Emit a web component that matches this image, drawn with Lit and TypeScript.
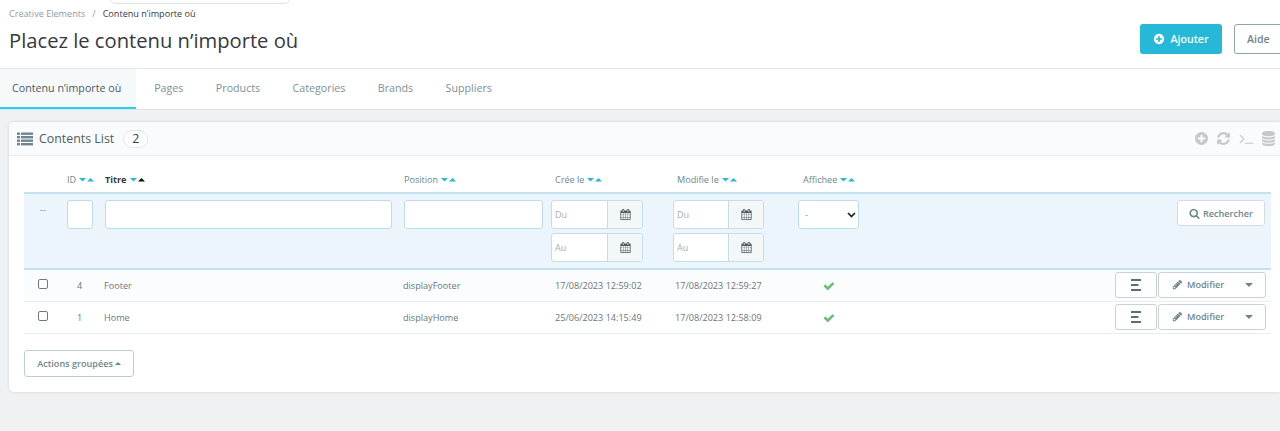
import { LitElement, html, css, svg } from 'lit';
import { customElement } from 'lit/decorators.js';

const FA = {
  plus: 'M1344 960v-128q0-26-19-45t-45-19h-256v-256q0-26-19-45t-45-19h-128q-26 0-45 19t-19 45v256h-256q-26 0-45 19t-19 45v128q0 26 19 45t45 19h256v256q0 26 19 45t45 19h128q26 0 45-19t19-45v-256h256q26 0 45-19t19-45zm320-64q0 209-103 385.5t-279.5 279.5-385.5 103-385.5-103-279.5-279.5-103-385.5 103-385.5 279.5-279.5 385.5-103 385.5 103 279.5 279.5 103 385.5z',
  refresh: 'M1639 1056q0 5-1 7-64 268-268 434.5t-478 166.5q-146 0-282.5-55t-243.5-157l-129 129q-19 19-45 19t-45-19-19-45v-448q0-26 19-45t45-19h448q26 0 45 19t19 45-19 45l-137 137q71 66 161 102t187 36q134 0 250-65t186-179q11-17 53-117 8-23 30-23h192q13 0 22.5 9.5t9.5 22.5zm25-800v448q0 26-19 45t-45 19h-448q-26 0-45-19t-19-45 19-45l138-138q-148-137-349-137-134 0-250 65t-186 179q-11 17-53 117-8 23-30 23h-199q-13 0-22.5-9.5t-9.5-22.5v-7q65-268 270-434.5t480-166.5q146 0 284 55.5t245 156.5l130-129q19-19 45-19t45 19 19 45z',
  terminal: 'M649 983l-466 466q-10 10-23 10t-23-10l-50-50q-10-10-10-23t10-23l393-393-393-393q-10-10-10-23t10-23l50-50q10-10 23-10t23 10l466 466q10 10 10 23t-10 23zm1079 457v64q0 14-9 23t-23 9h-960q-14 0-23-9t-9-23v-64q0-14 9-23t23-9h960q14 0 23 9t9 23z',
  database: 'M896 768q237 0 443-43t325-127v170q0 69-103 128t-280 93.5-385 34.5-385-34.5-280-93.5-103-128v-170q119 84 325 127t443 43zm0 768q237 0 443-43t325-127v170q0 69-103 128t-280 93.5-385 34.5-385-34.5-280-93.5-103-128v-170q119 84 325 127t443 43zm0-384q237 0 443-43t325-127v170q0 69-103 128t-280 93.5-385 34.5-385-34.5-280-93.5-103-128v-170q119 84 325 127t443 43zm0-1152q208 0 385 34.5t280 93.5 103 128v128q0 69-103 128t-280 93.5-385 34.5-385-34.5-280-93.5-103-128v-128q0-69 103-128t280-93.5 385-34.5z',
  search: 'M1216 832q0-185-131.5-316.5t-316.5-131.5-316.5 131.5-131.5 316.5 131.5 316.5 316.5 131.5 316.5-131.5 131.5-316.5zm512 832q0 52-38 90t-90 38q-54 0-90-38l-343-342q-179 124-399 124-143 0-273.5-55.5t-225-150-150-225-55.5-273.5 55.5-273.5 150-225 225-150 273.5-55.5 273.5 55.5 225 150 150 225 55.5 273.5q0 220-124 399l343 343q37 37 37 90z',
  pencil: 'M491 1536l91-91-235-235-91 91v107h128v128h107zm523-928q0-22-22-22-10 0-17 7l-542 542q-7 7-7 17 0 22 22 22 10 0 17-7l542-542q7-7 7-17zm-54-192l416 416-832 832h-416v-416zm683 96q0 53-37 90l-166 166-416-416 166-165q36-38 90-38 53 0 91 38l235 234q37 39 37 91z',
  check: 'M1671 566q0 40-28 68l-724 724-136 136q-28 28-68 28t-68-28l-136-136-362-362q-28-28-28-68t28-68l136-136q28-28 68-28t68 28l294 295 656-657q28-28 68-28t68 28l136 136q28 28 28 68z',
  calendar: 'M192 1664h288v-288h-288v288zm352 0h320v-288h-320v288zm-352-352h288v-320h-288v320zm352 0h320v-320h-320v320zm-352-384h288v-288h-288v288zm736 736h320v-288h-320v288zm-384-736h320v-288h-320v288zm768 736h288v-288h-288v288zm-384-352h320v-320h-320v320zm-352-864v-288q0-13-9.5-22.5t-22.5-9.5h-64q-13 0-22.5 9.5t-9.5 22.5v288q0 13 9.5 22.5t22.5 9.5h64q13 0 22.5-9.5t9.5-22.5zm736 864h288v-320h-288v320zm-384-384h320v-288h-320v288zm384 0h288v-288h-288v288zm32-480v-288q0-13-9.5-22.5t-22.5-9.5h-64q-13 0-22.5 9.5t-9.5 22.5v288q0 13 9.5 22.5t22.5 9.5h64q13 0 22.5-9.5t9.5-22.5zm384-64v1280q0 52-38 90t-90 38h-1408q-52 0-90-38t-38-90v-1280q0-52 38-90t90-38h128v-96q0-66 47-113t113-47h64q66 0 113 47t47 113v96h384v-96q0-66 47-113t113-47h64q66 0 113 47t47 113v96h128q52 0 90 38t38 90z',
};

const icon = (d: string, size: number, color: string) => html`<svg
  width=${size}
  height=${size}
  viewBox="0 0 1792 1792"
  fill=${color}
  style="flex:none"
>${svg`<path d=${d}></path>`}</svg>`;

const listIcon = html`<svg width="16" height="14" viewBox="0 0 16 14" fill="#6c868e" style="flex:none">
  <rect x="0" y="0.5" width="3" height="2.4"></rect><rect x="4" y="0.5" width="12" height="2.4"></rect>
  <rect x="0" y="4" width="3" height="2.4"></rect><rect x="4" y="4" width="12" height="2.4"></rect>
  <rect x="0" y="7.5" width="3" height="2.4"></rect><rect x="4" y="7.5" width="12" height="2.4"></rect>
  <rect x="0" y="11" width="3" height="2.4"></rect><rect x="4" y="11" width="12" height="2.4"></rect>
</svg>`;

const alignIcon = html`<svg width="10" height="12" viewBox="0 0 10 12" fill="#587078">
  <rect x="0" y="0" width="10" height="2"></rect>
  <rect x="0" y="5" width="7.500" height="2"></rect>
  <rect x="0" y="10" width="10" height="2"></rect>
</svg>`;

const sort = (active = false) => html`<svg class="sort" width="15" height="4" viewBox="0 0 15 4">
  <path d="M0 0h7L3.500 3.600z" fill="#25b9d7"></path>
  <path d="M8 3.600h7L11.500 0z" fill=${active ? '#111' : '#25b9d7'}></path>
</svg>`;

const dateField = (label: string) => html`<div class="date">
  <span class="date-text">${label}</span>
  <span class="date-btn">${icon(FA.calendar, 11, '#4d5b60')}</span>
</div>`;

interface Row {
  id: number;
  title: string;
  position: string;
  created: string;
  modified: string;
}

const ROWS: Row[] = [
  { id: 4, title: 'Footer', position: 'displayFooter', created: '17/08/2023 12:59:02', modified: '17/08/2023 12:59:27' },
  { id: 1, title: 'Home', position: 'displayHome', created: '25/06/2023 14:15:49', modified: '17/08/2023 12:58:09' },
];

@customElement('app-root')
export class AppRoot extends LitElement {
  static styles = css`
    :host {
      display: block;
      width: 1280px;
      height: 431px;
      overflow: hidden;
      background: #eff1f2;
      font-family: 'Open Sans', sans-serif;
      color: #6c868e;
    }
    * {
      box-sizing: border-box;
    }
    .top {
      height: 69px;
      background: #fff;
      border-bottom: 1px solid #e4e7e8;
      display: flex;
      align-items: flex-start;
      padding: 8px 0 0 9px;
      position: relative;
    }
    .top::before {
      content: '';
      position: absolute;
      left: 110px;
      top: -6px;
      width: 178px;
      height: 8px;
      border: 1px solid #dfe3e5;
      border-radius: 5px;
    }
    .heading {
      flex: 1;
    }
    .crumbs {
      display: flex;
      font-size: 9.1px;
      line-height: 12px;
      color: #8f9ca1;
    }
    .crumbs span {
      margin-right: 7px;
    }
    .crumbs b {
      font-weight: 400;
      color: #363a41;
    }
    h1 {
      margin: 6px 0 0;
      font-size: 20.2px;
      line-height: 28px;
      font-weight: 400;
      color: #363a41;
    }
    .top-actions {
      display: flex;
      gap: 12px;
      margin: 16px -4px 0 0;
    }
    .add {
      width: 82px;
      height: 30px;
      background: #25b9d7;
      border-radius: 3px;
      color: #fff;
      font-size: 10.6px;
      font-weight: 600;
      display: flex;
      align-items: center;
      justify-content: center;
      gap: 5px;
    }
    .help {
      width: 50px;
      height: 30px;
      background: #fff;
      border: 1px solid #8fa4ab;
      border-radius: 3px;
      font-size: 10.6px;
      font-weight: 600;
      padding-left: 12px;
      line-height: 28px;
      color: #6c868e;
    }
    .tabs {
      height: 41px;
      background: #fff;
      border-bottom: 1px solid #dfe3e5;
      display: flex;
      font-size: 10.7px;
      color: #7d9097;
    }
    .tab {
      padding: 0 16.2px;
      line-height: 38px;
    }
    .tab.active {
      width: 136px;
      margin-right: 2px;
      padding: 0 0 0 12px;
      background: #f6f9fa;
      border-bottom: 2px solid #25d0ee;
      color: #4d5b60;
    }
    .page {
      padding: 12px 0 0 9px;
    }
    .panel {
      width: 1271px;
      height: 270px;
      background: #fff;
      border-radius: 5px 0 0 5px;
      box-shadow: 0 0 3px rgba(0, 0, 0, 0.14);
    }
    .panel-head {
      height: 34px;
      background: #fafbfc;
      border-bottom: 1px solid #e9edef;
      border-radius: 5px 0 0 0;
      display: flex;
      align-items: center;
      padding: 0 4px 0 8px;
      font-size: 12.4px;
      color: #4d5b60;
    }
    .panel-title {
      margin-left: 6px;
    }
    .count {
      margin-left: 9px;
      width: 25px;
      height: 18px;
      background: #fff;
      border: 1px solid #e2e6e8;
      border-radius: 9px;
      text-align: center;
      line-height: 16px;
      font-size: 12.4px;
      color: #363a41;
    }
    .tools {
      margin-left: auto;
      display: flex;
      align-items: center;
      gap: 7.5px;
    }
    .list {
      width: 1247px;
      margin: 9px 0 0 15px;
    }
    .row {
      display: grid;
      grid-template-columns: 43px 38px 299px 147px 122px 125px 1fr auto;
    }
    .labels {
      height: 29px;
      border-bottom: 2px solid #c3e2f1;
      font-size: 9.1px;
      line-height: 12px;
      align-items: start;
      padding-top: 9px;
    }
    .labels > div {
      display: flex;
      align-items: center;
      gap: 3px;
    }
    .labels .dark {
      font-weight: 700;
      color: #363a41;
    }
    .labels .shift4 {
      margin-left: 4px;
    }
    .labels .shift5 {
      margin-left: 5px;
    }
    .sort {
      flex: none;
    }
    .filters {
      height: 76px;
      background: #ecf5fb;
      border-bottom: 2px solid #c3e2f1;
      padding-top: 6px;
      font-size: 9px;
    }
    .dash {
      padding: 4px 0 0 16px;
      line-height: 12px;
    }
    .input {
      height: 29px;
      background: #fff;
      border: 1px solid #bcdcf0;
      border-radius: 3px;
    }
    .id-input {
      width: 26px;
    }
    .title-input {
      width: 287px;
    }
    .pos-input {
      width: 139px;
    }
    .dates {
      display: flex;
      flex-direction: column;
      gap: 4px;
    }
    .date {
      width: 92px;
      height: 29px;
      background: #fff;
      border: 1px solid #c5dde9;
      border-radius: 3px;
      display: flex;
      overflow: hidden;
    }
    .dates + .dates .date {
      width: 91px;
    }
    .date-text {
      flex: 1;
      padding-left: 3px;
      line-height: 27px;
      color: #a4aeb2;
      font-size: 9px;
    }
    .date-btn {
      width: 35px;
      background: #f4f7f8;
      border-left: 1px solid #c5dde9;
      display: flex;
      align-items: center;
      justify-content: center;
    }
    .select {
      width: 61px;
      height: 29px;
      background: #fff;
      border: 1px solid #bcdcf0;
      border-radius: 3px;
      display: flex;
      justify-content: space-between;
      align-items: center;
      padding: 0 2px 0 6px;
      color: #8a9aa0;
    }
    .search {
      justify-self: end;
      margin-right: 6px;
      width: 88px;
      height: 26px;
      background: #fff;
      border: 1px solid #d3dde1;
      border-radius: 3px;
      display: flex;
      align-items: center;
      justify-content: center;
      gap: 3px;
      font-size: 9.1px;
      font-weight: 600;
      color: #6c868e;
    }
    .item {
      height: 32px;
      border-bottom: 1px solid #ebeef0;
      align-items: center;
      font-size: 9.1px;
      color: #6c767a;
    }
    .item.tint {
      background: #fbfcfd;
    }
    .box {
      width: 10px;
      height: 10px;
      margin: -3px 0 0 14px;
      border: 1px solid #6f7b7f;
      border-radius: 2px;
      background: #fff;
    }
    .num {
      padding-left: 10px;
    }
    .shift1 {
      margin-left: -1px;
    }
    .when {
      margin-left: 4px;
    }
    .when2 {
      margin-left: 2px;
    }
    .ok {
      width: 61px;
      display: flex;
      justify-content: center;
    }
    .btns {
      display: flex;
      gap: 1px;
      margin: -2px 5px 0 0;
    }
    .btn {
      height: 26px;
      background: #fff;
      border: 1px solid #c8d3d7;
      border-radius: 3px;
      display: flex;
      align-items: center;
      color: #6c868e;
    }
    .view {
      width: 42px;
      justify-content: center;
    }
    .edit {
      width: 108px;
      padding: 0 12px 0 13px;
      gap: 4px;
      font-weight: 600;
    }
    .caret {
      margin-left: auto;
      border-left: 4px solid transparent;
      border-right: 4px solid transparent;
      border-top: 4px solid #6c868e;
    }
    .bulk {
      margin: 16px 0 0 15px;
      width: 110px;
      height: 27px;
      border: 1px solid #bcced4;
      border-radius: 3px;
      display: flex;
      align-items: center;
      justify-content: center;
      gap: 2px;
      font-size: 9.1px;
      font-weight: 600;
      color: #6c868e;
    }
    .bulk i {
      border-left: 3px solid transparent;
      border-right: 3px solid transparent;
      border-bottom: 3px solid #6c868e;
    }
  `;

  render() {
    return html`
      <header class="top">
        <div class="heading">
          <div class="crumbs"><span>Creative Elements</span><span>/</span><b>Contenu n’importe où</b></div>
          <h1>Placez le contenu n’importe où</h1>
        </div>
        <div class="top-actions">
          <div class="add">${icon(FA.plus, 12, '#fff')}Ajouter</div>
          <div class="help">Aide</div>
        </div>
      </header>
      <nav class="tabs">
        <div class="tab active">Contenu n’importe où</div>
        <div class="tab">Pages</div>
        <div class="tab">Products</div>
        <div class="tab">Categories</div>
        <div class="tab">Brands</div>
        <div class="tab">Suppliers</div>
      </nav>
      <main class="page">
        <section class="panel">
          <div class="panel-head">
            ${listIcon}
            <span class="panel-title">Contents List</span>
            <span class="count">2</span>
            <div class="tools">
              ${icon(FA.plus, 15, '#c4c8ca')} ${icon(FA.refresh, 15, '#c4c8ca')}
              ${icon(FA.terminal, 15, '#c4c8ca')} ${icon(FA.database, 15, '#c4c8ca')}
            </div>
          </div>
          <div class="list">
            <div class="row labels">
              <div></div>
              <div>ID ${sort()}</div>
              <div class="dark">Titre ${sort(true)}</div>
              <div>Position ${sort()}</div>
              <div class="shift4">Crée le ${sort()}</div>
              <div class="shift4">Modifie le ${sort()}</div>
              <div class="shift5">Affichee ${sort()}</div>
            </div>
            <div class="row filters">
              <div class="dash">--</div>
              <div class="input id-input"></div>
              <div class="input title-input"></div>
              <div class="input pos-input"></div>
              <div class="dates">${dateField('Du')}${dateField('Au')}</div>
              <div class="dates">${dateField('Du')}${dateField('Au')}</div>
              <div class="select">
                <span>-</span>
                <svg width="9" height="6" viewBox="0 0 9 6" fill="none" stroke="#222" stroke-width="1.7">
                  <path d="M1 1l3.500 3.500L8 1"></path>
                </svg>
              </div>
              <div class="search">${icon(FA.search, 11, '#6c868e')}Rechercher</div>
            </div>
            ${ROWS.map(
              (r, i) => html`<div class="row item ${i === 0 ? 'tint' : ''}">
                <div class="box"></div>
                <div class="num">${r.id}</div>
                <div class="shift1">${r.title}</div>
                <div class="shift1">${r.position}</div>
                <div class="when">${r.created}</div>
                <div class="when2">${r.modified}</div>
                <div class="ok">${icon(FA.check, 12, '#6abf6e')}</div>
                <div class="btns">
                  <div class="btn view">${alignIcon}</div>
                  <div class="btn edit">${icon(FA.pencil, 11, '#6c868e')}Modifier<span class="caret"></span></div>
                </div>
              </div>`
            )}
          </div>
          <div class="bulk">Actions groupées <i></i></div>
        </section>
      </main>
    `;
  }
}
